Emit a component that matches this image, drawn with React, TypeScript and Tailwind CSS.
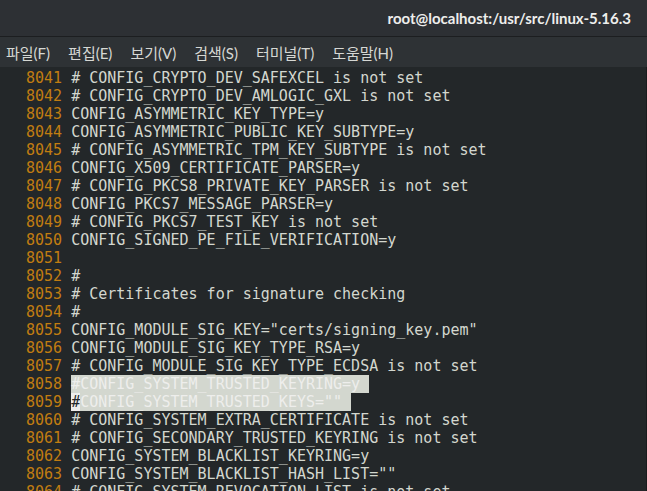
const lines: [string, string][] = [
  ["8041", "# CONFIG_CRYPTO_DEV_SAFEXCEL is not set"],
  ["8042", "# CONFIG_CRYPTO_DEV_AMLOGIC_GXL is not set"],
  ["8043", "CONFIG_ASYMMETRIC_KEY_TYPE=y"],
  ["8044", "CONFIG_ASYMMETRIC_PUBLIC_KEY_SUBTYPE=y"],
  ["8045", "# CONFIG_ASYMMETRIC_TPM_KEY_SUBTYPE is not set"],
  ["8046", "CONFIG_X509_CERTIFICATE_PARSER=y"],
  ["8047", "# CONFIG_PKCS8_PRIVATE_KEY_PARSER is not set"],
  ["8048", "CONFIG_PKCS7_MESSAGE_PARSER=y"],
  ["8049", "# CONFIG_PKCS7_TEST_KEY is not set"],
  ["8050", "CONFIG_SIGNED_PE_FILE_VERIFICATION=y"],
  ["8051", ""],
  ["8052", "#"],
  ["8053", "# Certificates for signature checking"],
  ["8054", "#"],
  ["8055", 'CONFIG_MODULE_SIG_KEY="certs/signing_key.pem"'],
  ["8056", "CONFIG_MODULE_SIG_KEY_TYPE_RSA=y"],
  ["8057", "# CONFIG_MODULE_SIG_KEY_TYPE_ECDSA is not set"],
];

const after: [string, string][] = [
  ["8060", "# CONFIG_SYSTEM_EXTRA_CERTIFICATE is not set"],
  ["8061", "# CONFIG_SECONDARY_TRUSTED_KEYRING is not set"],
  ["8062", "CONFIG_SYSTEM_BLACKLIST_KEYRING=y"],
  ["8063", 'CONFIG_SYSTEM_BLACKLIST_HASH_LIST=""'],
  ["8064", "# CONFIG_SYSTEM_REVOCATION_LIST is not set"],
];

const menus = ["파일(F)", "편집(E)", "보기(V)", "검색(S)", "터미널(T)", "도움말(H)"];

function Row({ num, children }: { num: string; children: React.ReactNode }) {
  return (
    <div className="h-[18px] leading-[18px] pl-[26px] whitespace-pre">
      <span className="text-[#c17d11]">{num}</span> {children}
    </div>
  );
}

export default function App() {
  return (
    <div className="w-[647px] h-[491px] overflow-hidden flex flex-col bg-[#232729]">
      <header className="h-[37px] shrink-0 flex items-center justify-end pr-[16px] bg-[#2d3034] border-b border-[#1c1e20]">
        <span
          className="text-[15px] font-bold text-[#eeeeec]"
          style={{ fontFamily: 'Lato, "Noto Sans", sans-serif' }}
        >
          root@localhost:/usr/src/linux-5.16.3
        </span>
      </header>
      <nav
        className="h-[30px] shrink-0 flex items-center gap-[18px] pl-[6px] pt-[3px] bg-[#2e3235] text-[15px] text-[#d6d8d4]"
        style={{ fontFamily: 'Lato, "Noto Sans CJK KR", sans-serif' }}
      >
        {menus.map((m) => (
          <span key={m}>{m}</span>
        ))}
      </nav>
      <main
        className="flex-1 pt-[2px] text-[15px] text-[#d3d7cf] border-r border-[#1a1c1d]"
        style={{ fontFamily: '"DejaVu Sans Mono", monospace' }}
      >
        {lines.map(([n, t]) => (
          <Row key={n} num={n}>{t}</Row>
        ))}
        <Row num="8058">
          <span className="bg-[#d3d7cf] text-[#eeeeec]">#CONFIG_SYSTEM_TRUSTED_KEYRING=y </span>
        </Row>
        <Row num="8059">
          <span className="bg-[#eeeeec] text-[#232729]">#</span>
          <span className="bg-[#d3d7cf] text-[#eeeeec]">CONFIG_SYSTEM_TRUSTED_KEYS="" </span>
        </Row>
        {after.map(([n, t]) => (
          <Row key={n} num={n}>{t}</Row>
        ))}
      </main>
    </div>
  );
}
